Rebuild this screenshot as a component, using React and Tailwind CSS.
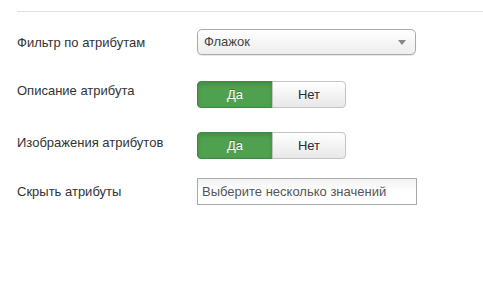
import React from 'react';

const Label = ({ children, pad = 'pt-[5px]' }) => (
  <div className={`w-[180px] shrink-0 leading-[18px] ${pad}`}>{children}</div>
);

const YesNo = () => (
  <div className="flex h-[27px]">
    <button className="w-[76px] h-full rounded-l-[4px] border border-[#3f8a40] bg-[#4fa150] text-white text-[13px] [text-shadow:0_-1px_0_rgba(0,0,0,0.25)] shadow-[inset_0_2px_4px_rgba(0,0,0,0.15)]">
      Да
    </button>
    <button className="w-[74px] h-full -ml-px rounded-r-[4px] border border-[#c4c4c4] bg-gradient-to-b from-white to-[#e8e8e8] text-[#2a2a3a] text-[13px]">
      Нет
    </button>
  </div>
);

const App = () => {
  return (
    <div className="w-[483px] h-[307px] bg-white overflow-hidden font-['Liberation_Sans',Arial,sans-serif] text-[13px] text-[#333]">
      {/* tabs cut at the top */}
      <div className="h-[11px] overflow-hidden pl-[20px]">
        <div className="-mt-[16px] leading-[18px] text-[#2a7bd4] whitespace-nowrap">
          Дополнительные параметры
        </div>
      </div>
      <div className="ml-[17px] border-t border-[#dedede]" />

      <div className="pl-[17px] pt-[17px]">
        {/* Фильтр */}
        <div className="flex">
          <Label>Фильтр по атрибутам</Label>
          <div className="relative w-[219px] h-[26px] rounded-[5px] border border-[#aaa] bg-gradient-to-b from-white via-[#f6f6f6] to-[#eee] shadow-[0_1px_1px_rgba(0,0,0,0.1)] flex items-center pl-[6px] text-[#444]">
            Флажок
            <span className="absolute right-[9px] top-[10px] w-0 h-0 border-l-[4px] border-r-[4px] border-t-[5px] border-l-transparent border-r-transparent border-t-[#888]" />
          </div>
        </div>

        {/* Описание */}
        <div className="flex mt-[26px]">
          <Label pad="pt-[1px]">Описание атрибута</Label>
          <YesNo />
        </div>

        {/* Изображения */}
        <div className="flex mt-[24px]">
          <Label pad="pt-[2px]">Изображения атрибутов</Label>
          <YesNo />
        </div>

        {/* Скрыть */}
        <div className="flex mt-[19px]">
          <Label>Скрыть атрибуты</Label>
          <div className="w-[220px] h-[27px] border border-[#aaa] bg-gradient-to-b from-[#f2f2f2] via-white to-white flex items-center pl-[4px] text-[#555]">
            Выберите несколько значений
          </div>
        </div>
      </div>
    </div>
  );
};

export default App;
